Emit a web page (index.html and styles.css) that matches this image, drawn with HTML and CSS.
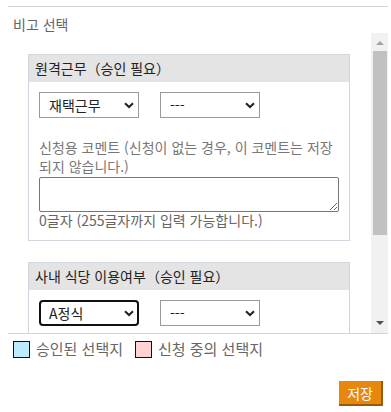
FILE: index.html
```html
<!DOCTYPE html>
<html lang="ko">
<head>
    <meta charset="UTF-8">
    <meta name="viewport" content="width=device-width, initial-scale=1.0">
    <title>비고 선택</title>
    <link rel="stylesheet" href="styles.css">
</head>
<body>
    <div class="wrapper">
        <h2 class="section-title">비고 선택</h2>

        <div class="scroll-area">
            <div class="scroll-content">
                <div class="panel">
                    <div class="panel-header">원격근무（승인 필요）</div>
                    <div class="panel-body">
                        <div class="select-row">
                            <div class="select-wrap">
                                <select class="select">
                                    <option>재택근무</option>
                                </select>
                                <svg class="chevron" width="10" height="7" viewBox="0 0 10 7"><path d="M1 1.2 L5 5 L9 1.2" fill="none" stroke="#222" stroke-width="2"/></svg>
                            </div>
                            <div class="select-wrap">
                                <select class="select">
                                    <option>---</option>
                                </select>
                                <svg class="chevron" width="10" height="7" viewBox="0 0 10 7"><path d="M1 1.2 L5 5 L9 1.2" fill="none" stroke="#222" stroke-width="2"/></svg>
                            </div>
                        </div>
                        <label class="comment-label">신청용 코멘트 (신청이 없는 경우, 이 코멘트는 저장되지 않습니다.)</label>
                        <textarea class="comment"></textarea>
                        <div class="char-count">0글자 (255글자까지 입력 가능합니다.)</div>
                    </div>
                </div>

                <div class="panel">
                    <div class="panel-header">사내 식당 이용여부（승인 필요）</div>
                    <div class="panel-body">
                        <div class="select-row">
                            <div class="select-wrap">
                                <select class="select focused">
                                    <option>A정식</option>
                                </select>
                                <svg class="chevron" width="10" height="7" viewBox="0 0 10 7"><path d="M1 1.2 L5 5 L9 1.2" fill="none" stroke="#222" stroke-width="2"/></svg>
                            </div>
                            <div class="select-wrap">
                                <select class="select">
                                    <option>---</option>
                                </select>
                                <svg class="chevron" width="10" height="7" viewBox="0 0 10 7"><path d="M1 1.2 L5 5 L9 1.2" fill="none" stroke="#222" stroke-width="2"/></svg>
                            </div>
                        </div>
                        <label class="comment-label">신청용 코멘트 (신청이 없는 경우, 이 코멘트는 저장되지 않습니다.)</label>
                        <textarea class="comment"></textarea>
                        <div class="char-count">0글자 (255글자까지 입력 가능합니다.)</div>
                    </div>
                </div>
            </div>

            <div class="scrollbar">
                <span class="arrow-up"></span>
                <div class="thumb"></div>
                <span class="arrow-down"></span>
            </div>
        </div>

        <div class="legend">
            <span class="legend-box approved"></span>
            <span class="legend-text">승인된 선택지</span>
            <span class="legend-box pending"></span>
            <span class="legend-text">신청 중의 선택지</span>
        </div>

        <div class="actions">
            <button class="save-btn">저장</button>
        </div>
    </div>
</body>
</html>
```

FILE: styles.css
```css
* {
    margin: 0;
    padding: 0;
    box-sizing: border-box;
    font-family: "Noto Sans CJK KR", "Noto Sans", sans-serif;
}

body {
    background-color: white;
    color: #333;
}

.wrapper {
    margin: 6px 3px 0 8px;
    border-top: 1px solid #d4d4d4;
}

.section-title {
    font-size: 14px;
    font-weight: normal;
    color: #666;
    line-height: 20px;
    padding: 7px 0 0 5px;
    height: 26px;
}

.scroll-area {
    display: flex;
    height: 301px;
    border-bottom: 1px solid #d4d4d4;
}

.scroll-content {
    flex: 1;
    overflow: hidden;
    padding-top: 21px;
}

.panel {
    margin: 0 21px 21px 20px;
    border: 1px solid #cfd6dd;
}

.panel-header {
    background-color: #e4e4e4;
    font-size: 14px;
    line-height: 27px;
    padding-left: 6px;
    color: #222;
}

.panel-body {
    padding: 10px 10px 11px;
}

.select-row {
    display: flex;
    gap: 21px;
}

.select-wrap {
    position: relative;
    width: 100px;
    height: 26px;
}

.select {
    appearance: none;
    -webkit-appearance: none;
    width: 100%;
    height: 100%;
    border: 1px solid #9a9a9a;
    border-radius: 0;
    background-color: white;
    font-size: 14px;
    color: #222;
    padding-left: 9px;
}

.select.focused {
    border: 2px solid #111;
    border-radius: 4px;
    padding-left: 8px;
}

.chevron {
    position: absolute;
    right: 5px;
    top: 10px;
    pointer-events: none;
}

.comment-label {
    display: block;
    margin-top: 20px;
    font-size: 14px;
    line-height: 19px;
    color: #777;
}

.comment {
    display: block;
    width: 300px;
    height: 35px;
    margin-top: 1px;
    border: 1px solid #767676;
    border-radius: 2px;
    resize: vertical;
}

.char-count {
    font-size: 14px;
    line-height: 17px;
    color: #666;
}

.scrollbar {
    width: 17px;
    background-color: #f1f1f1;
    display: flex;
    flex-direction: column;
    align-items: center;
    padding-top: 8px;
}

.arrow-up {
    width: 0;
    height: 0;
    border-left: 4px solid transparent;
    border-right: 4px solid transparent;
    border-bottom: 4px solid #a3a3a3;
}

.thumb {
    width: 14px;
    height: 184px;
    margin-top: 6px;
    background-color: #c1c1c1;
}

.arrow-down {
    width: 0;
    height: 0;
    margin-top: auto;
    margin-bottom: 8px;
    border-left: 4px solid transparent;
    border-right: 4px solid transparent;
    border-top: 4px solid #505050;
}

.legend {
    display: flex;
    align-items: center;
    padding: 5px 0 0 5px;
}

.legend-box {
    width: 17px;
    height: 17px;
    border: 1px solid #111;
}

.legend-box.approved {
    background-color: #bdeaff;
}

.legend-box.pending {
    background-color: #ffd3d3;
    margin-left: 12px;
}

.legend-text {
    font-size: 15px;
    line-height: 20px;
    color: #666;
    margin-left: 6px;
}

.actions {
    display: flex;
    justify-content: flex-end;
    padding: 22px 5px 0 0;
}

.save-btn {
    height: 25px;
    padding: 0 8px;
    background-color: #e8870e;
    color: white;
    font-size: 14px;
    border: none;
    border-right: 2px solid #9a5a08;
    border-bottom: 2px solid #9a5a08;
    cursor: pointer;
}
```
